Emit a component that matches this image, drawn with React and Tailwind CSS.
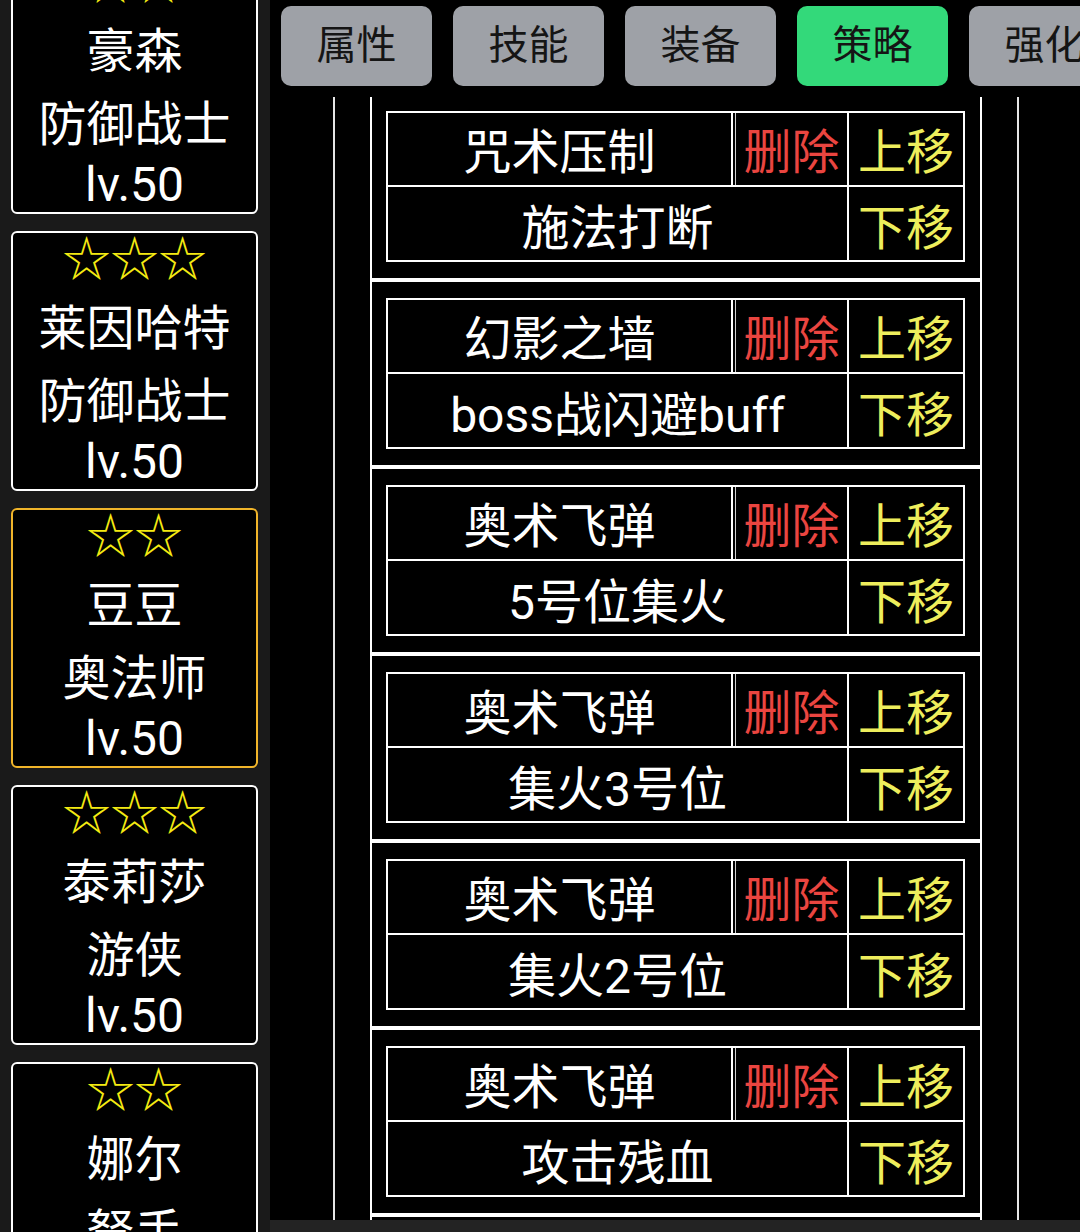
import React from "react";

const heroes = [
  { stars: 2, name: "豪森", cls: "防御战士", lv: "lv.50" },
  { stars: 3, name: "莱因哈特", cls: "防御战士", lv: "lv.50" },
  { stars: 2, name: "豆豆", cls: "奥法师", lv: "lv.50", active: true },
  { stars: 3, name: "泰莉莎", cls: "游侠", lv: "lv.50" },
  { stars: 2, name: "娜尔", cls: "弩手", lv: "lv.50" },
];

const tabs = ["属性", "技能", "装备", "策略", "强化"];

const strategies = [
  ["咒术压制", "施法打断"],
  ["幻影之墙", "boss战闪避buff"],
  ["奥术飞弹", "5号位集火"],
  ["奥术飞弹", "集火3号位"],
  ["奥术飞弹", "集火2号位"],
  ["奥术飞弹", "攻击残血"],
  ["奥术飞弹", "集火1号位"],
];

function HeroCard({ h }) {
  return (
    <div
      className={
        "flex h-[260px] w-[247px] shrink-0 flex-col items-center rounded-[6px] border-2 bg-black text-[48px] text-white " +
        (h.active ? "border-[#f1b52a]" : "border-white")
      }
    >
      <div className="flex h-[60px] items-center justify-center pb-[6px] leading-none text-[#f4ea12]">
        {"☆".repeat(h.stars)}
      </div>
      <div className="flex h-[72px] items-center justify-center leading-none">{h.name}</div>
      <div className="flex h-[70px] items-center justify-center pt-[4px] leading-none">{h.cls}</div>
      <div className="flex h-[54px] items-center justify-center leading-none">{h.lv}</div>
    </div>
  );
}

function StrategyCard({ s }) {
  return (
    <div className="shrink-0 border-2 border-white pb-[16px] pl-[14px] pr-[15px] pt-[16px]">
      <div className="flex h-[151px] w-[579px] flex-col border-2 border-white text-[48px] leading-none">
        <div className="flex h-[74px] border-b-2 border-white">
          <div className="flex w-[345px] items-center justify-center border-r-2 border-white pt-[7px] text-white">
            {s[0]}
          </div>
          <div className="ml-[2px] flex w-[112px] items-center justify-center border-l border-[#cfcfcf] pt-[7px] text-[#ea4540]">
            删除
          </div>
          <div className="flex w-[116px] items-center justify-center border-l-2 border-white pt-[7px] text-[#eeee5c]">
            上移
          </div>
        </div>
        <div className="flex flex-1">
          <div className="flex w-[459px] items-center justify-center pt-[11px] text-white">{s[1]}</div>
          <div className="flex w-[116px] items-center justify-center border-l-2 border-white pt-[11px] text-[#eeee5c]">
            下移
          </div>
        </div>
      </div>
    </div>
  );
}

export default function App() {
  return (
    <div
      className="flex h-[1232px] w-[1080px] overflow-hidden bg-black"
      style={{ fontFamily: 'Roboto, "Noto Sans CJK SC", sans-serif' }}
    >
      <aside className="h-full w-[270px] shrink-0 overflow-hidden bg-[#1a1a1a]">
        <div className="-mt-[46px] flex flex-col gap-[17px] pl-[11px]">
          {heroes.map((h, i) => (
            <HeroCard key={i} h={h} />
          ))}
        </div>
      </aside>
      <main className="flex h-full flex-1 flex-col overflow-hidden">
        <div className="flex h-[97px] shrink-0 gap-[21px] overflow-hidden pl-[11px] pt-[6px]">
          {tabs.map((t) => (
            <div
              key={t}
              className={
                "flex h-[80px] w-[151px] shrink-0 items-center justify-center rounded-[10px] text-[40px] leading-none text-[#151515] " +
                (t === "策略" ? "bg-[#33d97a]" : "bg-[#9ea1a7]")
              }
            >
              {t}
            </div>
          ))}
        </div>
        <div className="ml-[63px] min-h-0 w-[686px] flex-1 overflow-hidden border-x-2 border-[#e6e6e6] px-[35px]">
          <div className="-mt-[4px] flex flex-col">
            {strategies.map((s, i) => (
              <StrategyCard key={i} s={s} />
            ))}
          </div>
        </div>
        <div className="h-[12px] shrink-0 bg-[#232323]" />
      </main>
    </div>
  );
}
